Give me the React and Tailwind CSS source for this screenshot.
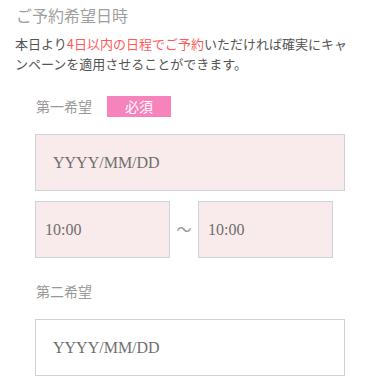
export default function App() {
  const jp = { fontFamily: '"Noto Sans CJK JP", "Noto Sans", sans-serif' };
  const serif = { fontFamily: '"Liberation Serif", "Noto Sans CJK JP", serif' };
  return (
    <div className="w-[379px] h-[380px] overflow-hidden bg-white pl-[15px] pr-[12px]" style={jp}>
      <div className="mt-[3px] pl-[1px] text-[16px] leading-[24px] text-[#a0a0a0]">ご予約希望日時</div>
      <p className="mt-[7px] text-[13px] leading-[20px] text-[#555555]">
        本日より<span className="text-[#ff5a5a]">4日以内の日程でご予約</span>いただければ確実にキャ
        <br />
        ンペーンを適用させることができます。
      </p>
      <div className="ml-[20px] mt-[22px] flex items-center h-[21px]">
        <span className="w-[72px] pl-[1px] text-[14px] text-[#999999]">第一希望</span>
        <span className="w-[64px] h-[21px] flex items-center justify-center bg-[#f783bd] text-white text-[14px]">必須</span>
      </div>
      <div className="ml-[20px] mt-[17px] w-[310px] h-[57px] flex items-center border border-[#cbd4db] bg-[#f9eaeb] pl-[17px] text-[16px] text-[#6f6f6f]" style={serif}>
        YYYY/MM/DD
      </div>
      <div className="ml-[20px] mt-[10px] flex items-center">
        <div className="w-[135px] h-[57px] flex items-center border border-[#cbd4db] bg-[#f9eaeb] pl-[9px] text-[16px] text-[#6f6f6f]" style={serif}>
          10:00
        </div>
        <span className="w-[28px] text-center text-[15px] text-[#999999]">〜</span>
        <div className="w-[135px] h-[57px] flex items-center border border-[#cbd4db] bg-[#f9eaeb] pl-[9px] text-[16px] text-[#6f6f6f]" style={serif}>
          10:00
        </div>
      </div>
      <div className="ml-[20px] mt-[23px] pl-[1px] h-[21px] leading-[21px] text-[14px] text-[#999999]">第二希望</div>
      <div className="ml-[20px] mt-[17px] w-[310px] h-[57px] flex items-center border border-[#cbd4db] bg-white pl-[17px] text-[16px] text-[#6f6f6f]" style={serif}>
        YYYY/MM/DD
      </div>
    </div>
  );
}
